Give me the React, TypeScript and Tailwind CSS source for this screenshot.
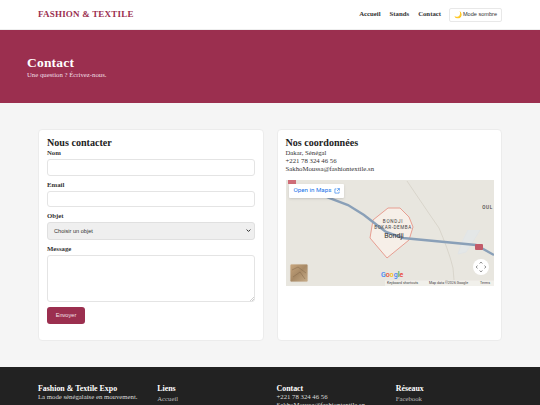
const serif = "font-['Liberation_Serif','Times_New_Roman',serif]";
const sans = "font-['Liberation_Sans',Arial,sans-serif]";

function Field({ label, children }: { label: string; children: React.ReactNode }) {
  return (
    <div className="mb-[5px]">
      <label className="mb-[2px] block text-[6.75px] leading-[8px] font-bold text-[#333]">{label}</label>
      {children}
    </div>
  );
}

function MapView() {
  return (
    <div className="relative mt-[7px] h-[106px] w-[208px] overflow-hidden bg-[#e9e6df]">
      <svg viewBox="0 0 208 106" className="absolute inset-0 h-full w-full">
        <defs>
          <linearGradient id="thumb" x1="0" y1="0" x2="1" y2="1">
            <stop offset="0" stopColor="#c9a77f" />
            <stop offset="0.5" stopColor="#a88a66" />
            <stop offset="1" stopColor="#c7ad8a" />
          </linearGradient>
        </defs>
        <rect width="208" height="106" fill="#e8e6df" />
        <path d="M121 1 L144 35 L153 48 C158 60 164 75 167 88 L168 100" fill="none" stroke="#cfc9bd" strokeWidth="0.6" />
        <path d="M182 50 L176 62 L172 74 L180 72 L188 60 L194 50" fill="#e4e7e7" stroke="#dfe3e6" strokeWidth="0.8" />
        <path d="M102 28 L114 28 L123 37 L127 47 L123 60 L101 78 L84 58 L87 40 Z" fill="#f6efe8" stroke="#e48a7c" strokeWidth="0.8" />
        <path d="M25 10 L43 18 L62 25 L78 35 L87 42 L100 52 L117 58 L190 65 L208 75" fill="none" stroke="#8aa0b8" strokeWidth="2.4" />
        <rect x="2" y="0" width="8" height="4" fill="#cf6d78" />
        <rect x="189" y="64" width="8" height="6" rx="1" fill="#c25a68" />
        <text x="107" y="43" textAnchor="middle" fontSize="4.6" letterSpacing="0.7" fill="#444" fontFamily="Roboto, sans-serif">BONDJI</text>
        <text x="107" y="48.7" textAnchor="middle" fontSize="4.6" letterSpacing="0.55" fill="#444" fontFamily="Roboto, sans-serif">BOKAR-DEMBA</text>
        <text x="108" y="57.5" textAnchor="middle" fontSize="7" fill="#333" fontFamily="Roboto, sans-serif">Bondji</text>
        <text x="207" y="29" textAnchor="end" fontSize="4.6" letterSpacing="0.7" fontWeight="500" fill="#444" fontFamily="Roboto, sans-serif">OUL</text>
        <rect x="4" y="84" width="18" height="18" rx="1.5" fill="url(#thumb)" stroke="#e5e1d8" strokeWidth="0.8" />
        <path d="M6 90 L12 87 L20 93 M7 97 L14 92 L19 99" stroke="#8a6f50" strokeWidth="0.6" fill="none" />
        <circle cx="195" cy="87" r="8" fill="#fff" />
        <path d="M195 82 L193.6 83.6 M195 82 L196.4 83.6 M195 92 L193.6 90.4 M195 92 L196.4 90.4 M190 87 L191.6 85.6 M190 87 L191.6 88.4 M200 87 L198.4 85.6 M200 87 L198.4 88.4" stroke="#666" strokeWidth="0.7" fill="none" />
        <text x="95" y="97" fontSize="7" fontWeight="500" fontFamily="Roboto, sans-serif"><tspan fill="#4285f4">G</tspan><tspan fill="#ea4335">o</tspan><tspan fill="#fbbc05">o</tspan><tspan fill="#4285f4">g</tspan><tspan fill="#34a853">l</tspan><tspan fill="#ea4335">e</tspan></text>
        <rect x="99" y="100.5" width="109" height="5.5" fill="#f4f3ef" opacity="0.75" />
        <text x="101" y="104.4" fontSize="3.6" fill="#444" fontFamily="Roboto, sans-serif">Keyboard shortcuts</text>
        <text x="143" y="104.4" fontSize="3.6" fill="#444" fontFamily="Roboto, sans-serif">Map data ©2026 Google</text>
        <text x="194" y="104.4" fontSize="3.6" fill="#444" fontFamily="Roboto, sans-serif">Terms</text>
      </svg>
      <div className="absolute left-[3px] top-[4px] flex h-[14px] w-[55px] items-center gap-[3px] rounded-[1px] bg-white pl-[5px] text-[6.2px] text-[#1a73e8] shadow-sm font-['Roboto',sans-serif]">
        Open in Maps
        <svg viewBox="0 0 10 10" className="h-[6px] w-[6px]" fill="none" stroke="#1a73e8" strokeWidth="1">
          <path d="M4 1.5 H1.5 V8.5 H8.5 V6 M5.5 1 H9 V4.5 M9 1 L5 5" />
        </svg>
      </div>
    </div>
  );
}

export default function App() {
  const input = "block h-[16.5px] w-full rounded-[3px] border border-[#e4e4e4] bg-white";
  return (
    <div className={`${serif} flex h-[405px] w-[540px] flex-col overflow-hidden bg-[#f5f5f5] text-[#222]`}>
      <header className="flex h-[30px] shrink-0 items-center justify-between border-b border-[#eeeeee] bg-white px-[38px]">
        <div className="text-[9px] font-bold tracking-[0.2px] text-[#9b2f4f]">FASHION &amp; TEXTILE</div>
        <nav className="flex items-center gap-[9px] text-[6.75px] font-bold text-[#333]">
          <span>Accueil</span>
          <span>Stands</span>
          <span>Contact</span>
          <button className={`${sans} -ml-[1px] flex h-[14px] w-[53px] items-center justify-center gap-[1px] rounded-[2px] border border-[#e8e8e8] bg-white text-[5.6px] font-normal text-[#333]`}>
            <span className="text-[6.5px] text-[#f2c230]">🌙</span> Mode sombre
          </button>
        </nav>
      </header>

      <section className="flex h-[73px] shrink-0 flex-col justify-center bg-[#9b2f4f] pl-[27px] text-white">
        <h1 className="text-[13.5px] font-bold leading-[15px] tracking-[0.2px]">Contact</h1>
        <p className="text-[6.75px] leading-[9px] text-[#f0dfe5]">Une question ? Écrivez-nous.</p>
      </section>

      <main className="grid h-[264px] shrink-0 grid-cols-2 gap-[13px] px-[38px] pt-[26px] pb-[26px]">
        <div className="rounded-[4px] border border-[#ececec] bg-white px-[8px] pt-[7px]">
          <h2 className="text-[10.1px] font-bold leading-[12px] text-[#222]">Nous contacter</h2>
          <Field label="Nom"><div className={input} /></Field>
          <Field label="Email"><div className={input} /></Field>
          <Field label="Objet">
            <div className={`${sans} flex h-[17.5px] w-full items-center justify-between rounded-[3px] border border-[#e0e0e0] bg-[#efefef] pl-[6px] pr-[3px] text-[5.6px] text-[#333]`}>
              Choisir un objet
              <svg viewBox="0 0 8 8" className="h-[5px] w-[5px]" fill="none" stroke="#333" strokeWidth="1.6"><path d="M1 2.5 L4 5.5 L7 2.5" /></svg>
            </div>
          </Field>
          <Field label="Message">
            <div className="relative h-[47.5px] w-full rounded-[3px] border border-[#e4e4e4] bg-white">
              <svg viewBox="0 0 4 4" className="absolute bottom-0 right-0 h-[4px] w-[4px]" stroke="#888" strokeWidth="0.4"><path d="M0 4 L4 0 M2 4 L4 2" /></svg>
            </div>
          </Field>
          <button className={`${sans} mt-[3px] block h-[17px] w-[38px] rounded-[3px] bg-[#9b2f4f] text-[5.6px] text-[#f5e3e9]`}>Envoyer</button>
        </div>
        <div className="rounded-[4px] border border-[#ececec] bg-white px-[8px] pt-[7px]">
          <h2 className="text-[10.1px] font-bold leading-[12px] text-[#222]">Nos coordonnées</h2>
          <p className="text-[6.75px] leading-[8px] text-[#333]">Dakar, Sénégal</p>
          <p className="text-[6.75px] leading-[8px] text-[#333]">+221 78 324 46 56</p>
          <p className="text-[6.75px] leading-[8px] text-[#333]">SakhoMoussa@fashiontextile.sn</p>
          <MapView />
        </div>
      </main>

      <footer className="grid flex-1 grid-cols-4 gap-[13px] bg-[#222222] px-[38px] pt-[17px] text-[6.75px] leading-[8px] text-[#ddd]">
        <div>
          <div className="text-[7.9px] font-bold leading-[9px] text-white">Fashion &amp; Textile Expo</div>
          <div>La mode sénégalaise en mouvement.</div>
        </div>
        <div>
          <div className="mb-[2px] text-[7.9px] font-bold leading-[9px] text-white">Liens</div>
          <div className="text-[#bbb]">Accueil</div>
        </div>
        <div>
          <div className="text-[7.9px] font-bold leading-[9px] text-white">Contact</div>
          <div>+221 78 324 46 56</div>
          <div>SakhoMoussa@fashiontextile.sn</div>
        </div>
        <div>
          <div className="mb-[2px] text-[7.9px] font-bold leading-[9px] text-white">Réseaux</div>
          <div className="text-[#bbb]">Facebook</div>
        </div>
      </footer>
    </div>
  );
}
